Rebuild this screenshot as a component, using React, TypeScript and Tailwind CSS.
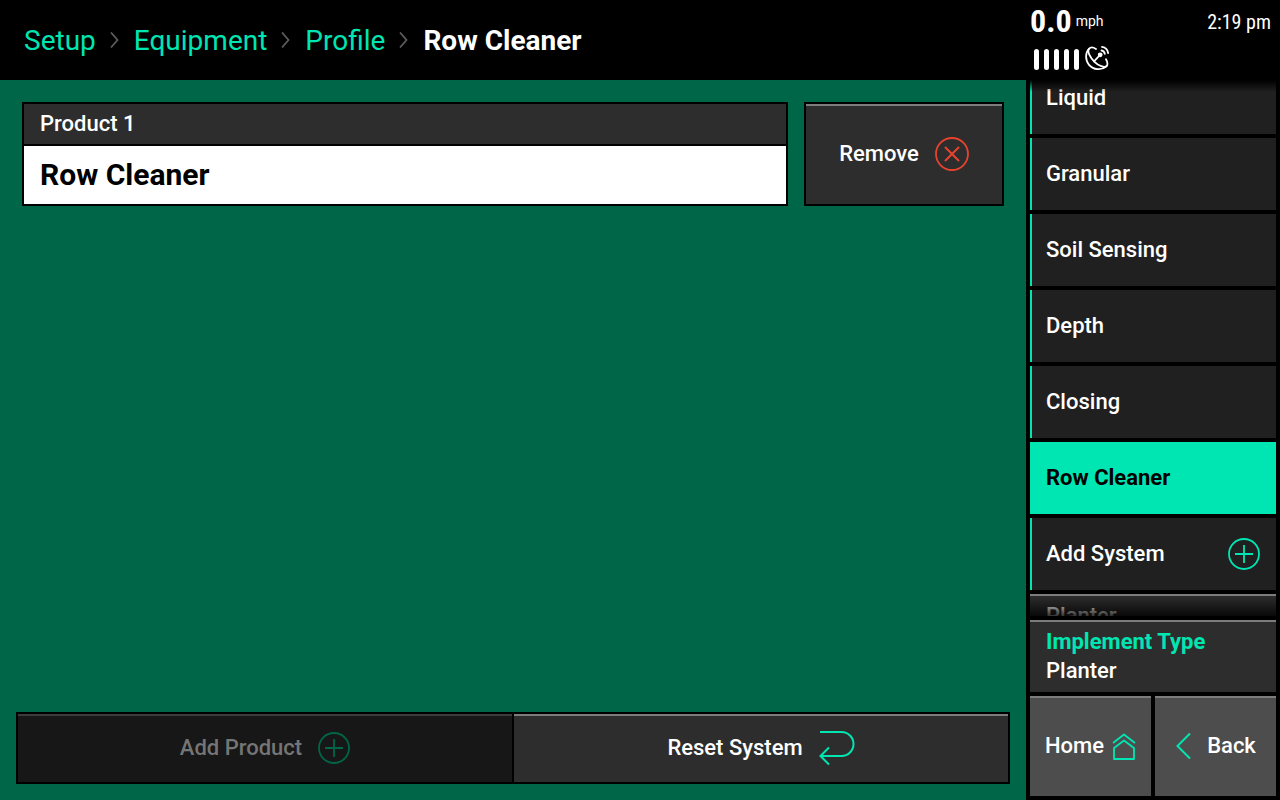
import { useEffect, useRef } from "react";

function PlusCircle({ className }: { className: string }) {
  return (
    <svg viewBox="0 0 32 32" fill="none" stroke="currentColor" strokeWidth="1.8" className={className} aria-hidden="true">
      <circle cx="16" cy="16" r="15" />
      <path d="M16 7v18M7 16h18" />
    </svg>
  );
}

function RemoveCircle() {
  return (
    <svg viewBox="0 0 34 34" fill="none" stroke="currentColor" strokeWidth="1.8" className="size-[34px] shrink-0 text-[#e8432e]" aria-hidden="true">
      <circle cx="17" cy="17" r="16" />
      <path d="M10.5 10.5l13 13M23.5 10.5l-13 13" strokeWidth="2" strokeLinecap="round" />
    </svg>
  );
}

function ResetIcon() {
  return (
    <svg viewBox="0 0 36 36" fill="none" stroke="currentColor" strokeWidth="2" className="size-9 shrink-0 text-[#00e6b2]" aria-hidden="true">
      <path d="M1 2h21.500a12 12 0 0 1 0 24H2" />
      <path d="M10 17.500L1.500 26l8.500 8.500" />
    </svg>
  );
}

function HomeIcon() {
  return (
    <svg viewBox="0 0 24 28" fill="none" stroke="currentColor" strokeWidth="1.8" strokeLinejoin="round" className="h-7 w-6 shrink-0 text-[#00e6b2]" aria-hidden="true">
      <path d="M1 11L12 2.500l11 8.500" />
      <path d="M2 27V16L12 8.500l10 7.500V27z" />
    </svg>
  );
}

function BackIcon() {
  return (
    <svg viewBox="0 0 16 28" fill="none" stroke="currentColor" strokeWidth="2" className="h-7 w-4 shrink-0 text-[#00e6b2]" aria-hidden="true">
      <path d="M15 1.500L2.500 14 15 26.500" />
    </svg>
  );
}

function DishIcon() {
  return (
    <svg viewBox="0 0 24 24" fill="none" stroke="currentColor" strokeWidth="1.8" strokeLinecap="round" className="size-6 shrink-0" aria-hidden="true">
      <path d="M11 3C8.500 1.300 5.500 1 4 2.800C1.800 5.500 5.500 12 9.500 15.800C13.500 19.800 19.500 22 21.500 20.200C23 18.700 22.500 16 21 13.300" />
      <path d="M4 2.800C0 7 .3 14.500 4 18.800C8.500 24 16.500 24.500 21.500 20.200" />
      <path d="M9 15.300L15 9" />
      <circle cx="15.200" cy="8.800" r="1.500" fill="currentColor" />
      <path d="M16.500 4.500a4.200 4.200 0 0 1 3.300 3.300M17 .9a7.200 7.200 0 0 1 6.100 6.100" />
    </svg>
  );
}

function Breadcrumbs() {
  return (
    <nav aria-label="Breadcrumb" className="flex h-20 items-center px-6 pt-[2px] text-[28px] leading-8">
      <ol className="flex items-center gap-[14px]">
        {["Setup", "Equipment", "Profile"].map((name) => (
          <li key={name} className="flex items-center gap-[14px]">
            <a href="#" className="text-[#00e6b2]">{name}</a>
            <svg viewBox="0 0 10 18" fill="none" stroke="#5c5c5c" strokeWidth="1.8" className="h-[18px] w-[10px]" aria-hidden="true">
              <path d="M1 .5L7.500 8 1 15.500" />
            </svg>
          </li>
        ))}
        <li aria-current="page" className="font-bold text-white">Row Cleaner</li>
      </ol>
    </nav>
  );
}

function StatusBar() {
  return (
    <header className="flex h-20 shrink-0 flex-col gap-[7px] px-1 pt-[3px]">
      <div className="flex items-center font-['Roboto_Condensed',Roboto,sans-serif]">
        <span className="text-[32px] leading-9 font-bold">0.0</span>
        <span className="ml-1 font-['Roboto',sans-serif] text-sm">mph</span>
        <span className="ml-auto pr-[5px] pt-[2px] text-xl">2:19 pm</span>
      </div>
      <div className="flex items-center gap-[6px] pl-1">
        <div className="flex gap-[5px] pt-[3px]">
          {[0, 1, 2, 3, 4].map((bar) => (
            <span key={bar} className="h-[21px] w-[5px] rounded-sm bg-white" />
          ))}
        </div>
        <DishIcon />
      </div>
    </header>
  );
}

const systems = ["Liquid", "Granular", "Soil Sensing", "Depth", "Closing", "Row Cleaner", "Add System"];

function SystemList() {
  const list = useRef<HTMLDivElement>(null);

  useEffect(() => {
    if (list.current) list.current.scrollTop = 18;
  }, []);

  return (
    <div className="relative mb-1 min-h-0 flex-1">
      <div ref={list} className="flex h-full flex-col gap-1 overflow-y-auto px-1 [scrollbar-width:none]">
        {systems.map((name) => {
          const active = name === "Row Cleaner";
          return (
            <button
              key={name}
              type="button"
              className={
                active
                  ? "flex h-[72px] shrink-0 items-center bg-[#00e6b2] px-4 text-left font-bold text-black"
                  : "flex h-[72px] shrink-0 items-center justify-between border-l-2 border-[#00e6b2] bg-[#202020] pr-4 pl-[14px] text-left font-medium text-white"
              }
            >
              {name}
              {name === "Add System" && <PlusCircle className="size-8 shrink-0 text-[#00e6b2]" />}
            </button>
          );
        })}
        <button type="button" className="flex h-[72px] shrink-0 items-start bg-[#2d2d2d] px-4 pt-2 text-left font-medium shadow-[inset_0_2px_#7c7c7c]">
          Planter
        </button>
      </div>
      <div className="pointer-events-none absolute inset-x-0 top-0 h-3 bg-linear-to-b from-black to-transparent" />
      <div className="pointer-events-none absolute inset-x-0 bottom-0 h-5 bg-linear-to-t from-black/80 to-transparent" />
    </div>
  );
}

function Sidebar() {
  return (
    <aside className="flex w-[254px] shrink-0 flex-col bg-black text-[22px] leading-7 text-white">
      <StatusBar />
      <SystemList />
      <div className="flex flex-col gap-1 px-1 pb-1">
        <button type="button" className="flex h-[72px] flex-col justify-center bg-[#2d2d2d] px-4 text-left leading-[29px] font-medium shadow-[inset_0_2px_#7c7c7c]">
          <span className="font-bold text-[#00e6b2]">Implement Type</span>
          <span>Planter</span>
        </button>
        <div className="grid grid-cols-2 gap-1 font-medium">
          <button type="button" className="flex h-[100px] items-center justify-center gap-2 bg-[#4d4d4d] shadow-[inset_0_2px_#7c7c7c]">
            Home
            <HomeIcon />
          </button>
          <button type="button" className="flex h-[100px] items-center justify-center gap-4 bg-[#4d4d4d] shadow-[inset_0_2px_#7c7c7c]">
            <BackIcon />
            Back
          </button>
        </div>
      </div>
    </aside>
  );
}

export default function App() {
  return (
    <div className="flex h-screen min-h-[600px] bg-black font-['Roboto',sans-serif]">
      <div className="flex min-w-0 flex-1 flex-col">
        <Breadcrumbs />
        <main className="flex flex-1 flex-col justify-between bg-[#006648] text-[22px] leading-7 font-medium text-white">
          <section className="flex gap-4 p-[22px]">
            <div className="flex min-w-0 flex-1 flex-col gap-[2px] border-2 border-black bg-black">
              <label htmlFor="product-1" className="flex h-10 items-center bg-[#2d2d2d] px-4">Product 1</label>
              <input
                id="product-1"
                type="text"
                defaultValue="Row Cleaner"
                className="h-[58px] w-full bg-white px-4 pb-[2px] text-[30px] font-bold text-black"
              />
            </div>
            <button type="button" className="w-[200px] border-2 border-black bg-black">
              <span className="flex h-full items-center justify-center gap-4 bg-[#2d2d2d] shadow-[inset_0_2px_#7c7c7c]">
                Remove
                <RemoveCircle />
              </span>
            </button>
          </section>
          <footer className="px-4 pb-4">
            <div className="grid h-[72px] grid-cols-2 gap-[2px] border-2 border-black bg-black">
              <button type="button" disabled className="flex items-center justify-center gap-4 bg-[#171717] text-[#757575] shadow-[inset_0_2px_#3c3c3c]">
                Add Product
                <PlusCircle className="size-8 shrink-0 text-[#006648]" />
              </button>
              <button type="button" className="flex items-center justify-center gap-4 bg-[#2d2d2d] shadow-[inset_0_2px_#7c7c7c]">
                Reset System
                <ResetIcon />
              </button>
            </div>
          </footer>
        </main>
      </div>
      <Sidebar />
    </div>
  );
}
